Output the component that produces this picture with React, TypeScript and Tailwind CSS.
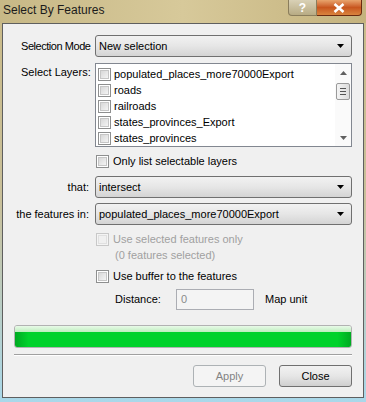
import React from 'react';

const font = { fontFamily: '"Liberation Sans", Arial, sans-serif' };

const Check = ({ disabled = false }: { disabled?: boolean }) => (
  <span
    className={`inline-block w-[13px] h-[13px] border shrink-0 ${
      disabled ? 'border-[#c8c8c8] bg-[#f4f4f4]' : 'border-[#8e8f8f] bg-white'
    }`}
  >
    <span
      className={`block m-[1px] w-[9px] h-[9px] border ${
        disabled
          ? 'border-[#e0e0e0] bg-[#f0f0f0]'
          : 'border-[#c6c6c6] bg-gradient-to-br from-[#d8d8d8] to-[#f4f4f4]'
      }`}
    />
  </span>
);

const Arrow = () => (
  <svg width="7" height="4" viewBox="0 0 7 4" className="shrink-0">
    <path d="M0 0h7L3.5 4z" fill="#000" />
  </svg>
);

const Combo = ({ value }: { value: string }) => (
  <div className="w-[257px] h-[22px] shrink-0 rounded-[3px] border border-[#707070] bg-gradient-to-b from-[#f2f2f2] via-[#e6e6e6] to-[#d4d4d4] flex items-center pl-[3px] pr-[7px]">
    <span className="flex-1 text-[11px] text-black">{value}</span>
    <Arrow />
  </div>
);

const Layers = [
  'populated_places_more70000Export',
  'roads',
  'railroads',
  'states_provinces_Export',
  'states_provinces',
];

export default function App() {
  return (
    <div
      style={font}
      className="w-[366px] h-[402px] flex flex-col bg-gradient-to-b from-[#cbbb88] via-[#c9c09a] to-[#a9d8ea] overflow-hidden"
    >
      {/* title bar */}
      <div className="h-[23px] flex items-start shrink-0 bg-gradient-to-r from-[#c7b886] via-[#d7c99a] to-[#c5b37e]">
        <span className="pl-[3px] pt-[1px] text-[12px] text-[#1b1b1b] flex-1">Select By Features</span>
        <div className="flex mr-[4px]">
          <div className="w-[29px] h-[16px] rounded-bl-[4px] border border-[#8a7d5c] border-t-0 bg-gradient-to-b from-[#d9d1b6] to-[#b8ab84] flex items-center justify-center text-white text-[12px] font-bold leading-none">
            ?
          </div>
          <div className="w-[45px] h-[16px] rounded-br-[4px] border border-[#6b2a10] border-t-0 border-l-0 bg-gradient-to-b from-[#e8a46c] via-[#c8561e] to-[#d9843e] flex items-center justify-center">
            <svg width="12" height="10" viewBox="0 0 12 10">
              <path d="M1.5 1L10.5 9M10.5 1L1.5 9" stroke="#fff" strokeWidth="2.6" />
            </svg>
          </div>
        </div>
      </div>

      {/* client area */}
      <div className="mx-[2px] mb-[4px] flex-1 border border-[#5f5f5f] bg-[#f0f0f0] text-[11px] leading-[13px] text-black flex flex-col pt-[11px]">
        <div className="flex items-center">
          <span className="w-[92px] shrink-0 pl-[18px] whitespace-nowrap tracking-[-0.45px]">Selection Mode</span>
          <Combo value="New selection" />
        </div>

        <div className="flex items-start mt-[6px]">
          <span className="w-[92px] shrink-0 pl-[18px] pt-[3px]">Select Layers:</span>
          <div className="w-[257px] h-[84px] border border-[#828790] bg-white flex">
            <div className="flex-1 flex flex-col pl-[2px] pt-[2px]">
              {Layers.map((l) => (
                <div key={l} className="h-[16px] flex items-center gap-[3px]">
                  <Check />
                  <span>{l}</span>
                </div>
              ))}
            </div>
            <div className="w-[16px] flex flex-col items-center bg-[#fafafa] pt-[1px] pb-[1px]">
              <div className="h-[16px] flex items-center">
                <svg width="7" height="4" viewBox="0 0 7 4"><path d="M3.5 0L7 4H0z" fill="#606060" /></svg>
              </div>
              <div className="mt-[2px] w-[14px] h-[17px] rounded-[2px] border border-[#9a9a9a] bg-gradient-to-r from-[#f4f4f4] to-[#dcdcdc] flex flex-col items-center justify-center gap-[2px]">
                <span className="w-[6px] h-[1px] bg-[#555]" />
                <span className="w-[6px] h-[1px] bg-[#555]" />
                <span className="w-[6px] h-[1px] bg-[#555]" />
              </div>
              <div className="flex-1" />
              <div className="h-[14px] flex items-center">
                <svg width="7" height="4" viewBox="0 0 7 4"><path d="M0 0h7L3.5 4z" fill="#606060" /></svg>
              </div>
            </div>
          </div>
        </div>

        <div className="flex items-center gap-[4px] mt-[8px] pl-[93px]">
          <Check />
          <span>Only list selectable layers</span>
        </div>

        <div className="flex items-center mt-[8px]">
          <span className="w-[92px] shrink-0 text-right pr-[6px]">that:</span>
          <Combo value="intersect" />
        </div>

        <div className="flex items-center mt-[5px]">
          <span className="w-[92px] shrink-0 text-right pr-[6px] whitespace-nowrap">the features in:</span>
          <Combo value="populated_places_more70000Export" />
        </div>

        <div className="flex items-center gap-[4px] mt-[8px] pl-[93px] text-[#a0a0a0]">
          <Check disabled />
          <span>Use selected features only</span>
        </div>
        <div className="pl-[112px] mt-[3px] text-[#a0a0a0]">(0 features selected)</div>

        <div className="flex items-center gap-[4px] mt-[8px] pl-[93px]">
          <Check />
          <span>Use buffer to the features</span>
        </div>

        <div className="flex items-center mt-[6px] pl-[112px]">
          <span className="w-[61px] shrink-0">Distance:</span>
          <div className="w-[78px] h-[21px] border border-[#abadb3] bg-[#f4f4f4] flex items-center pl-[4px] text-[#8a8a8a]">
            0
          </div>
          <span className="ml-[11px]">Map unit</span>
        </div>

        <div className="mt-[15px] mx-[11px] h-[23px] rounded-[3px] border border-[#b2b2b2] overflow-hidden flex flex-col">
          <div className="h-[6px] bg-gradient-to-b from-[#e8fae8] to-[#bdeebd]" />
          <div className="flex-1 bg-[linear-gradient(to_right,#00aa22,#00d22b_4%,#00d22b_96%,#00aa22)]" />
        </div>

        <div className="mt-[6px] mx-[11px] h-[2px] border-t border-[#a0a0a0] border-b border-b-white" />

        <div className="flex justify-end gap-[13px] mt-[9px] pr-[11px]">
          <div className="w-[73px] h-[22px] rounded-[3px] border border-[#adb2b5] bg-[#f4f4f4] flex items-center justify-center text-[#838383]">
            Apply
          </div>
          <div className="w-[73px] h-[22px] rounded-[3px] border border-[#707070] bg-gradient-to-b from-[#f2f2f2] via-[#e6e6e6] to-[#cfcfcf] flex items-center justify-center">
            Close
          </div>
        </div>
      </div>
    </div>
  );
}
